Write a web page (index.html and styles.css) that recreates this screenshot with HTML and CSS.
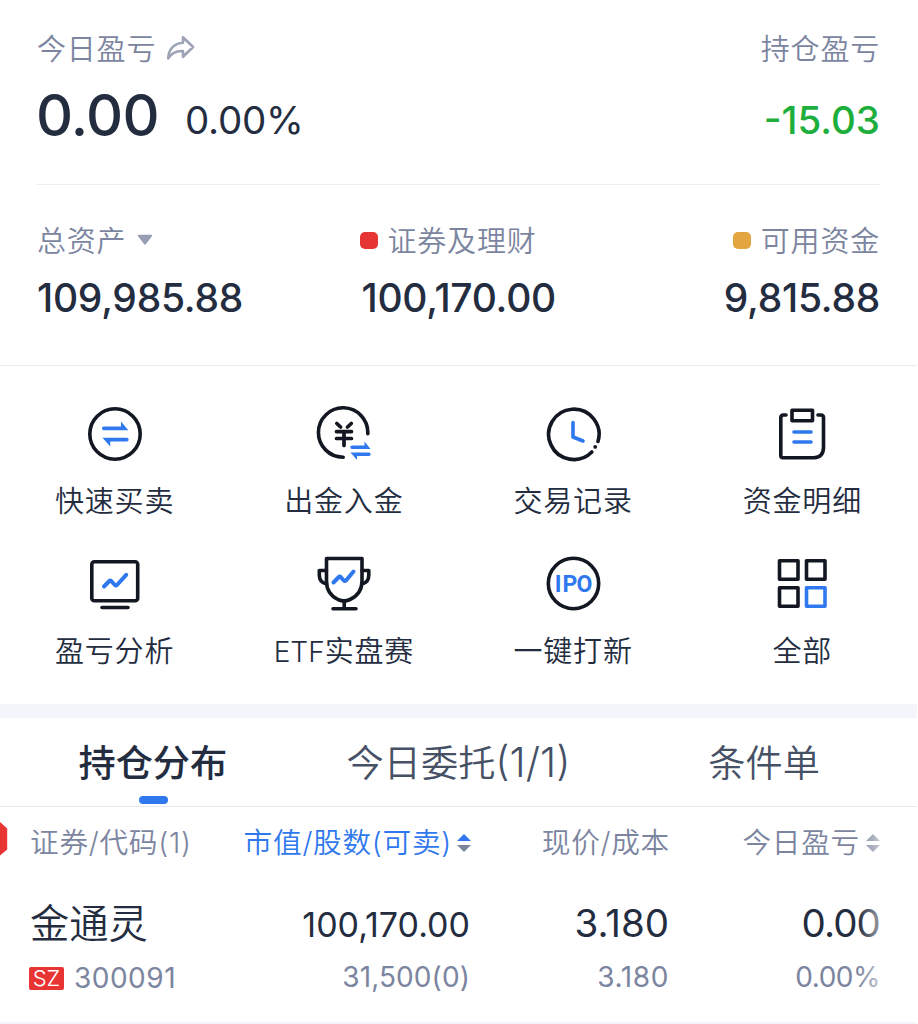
FILE: index.html
```html
<!DOCTYPE html>
<html lang="zh-CN">
<head>
<meta charset="utf-8">
<title>持仓</title>
<link rel="stylesheet" href="styles.css">
</head>
<body>
<main class="page">
  <section class="summary">
    <div class="profit">
      <div class="profit-today">
        <div class="label">今日盈亏
          <svg class="share" width="30" height="26" viewBox="0 0 30 26"><path d="M17 2.200 27.100 12 17 21.800V16C10 15.600 5.600 17.800 2.200 23.400 2.500 14.500 8 8.200 17 7.800Z" fill="none" stroke="#9ea4b8" stroke-width="2.600" stroke-linejoin="round"/></svg>
        </div>
        <div class="figures"><span class="big">0.00</span><span class="pct">0.00%</span></div>
      </div>
      <div class="profit-hold">
        <div class="label">持仓盈亏</div>
        <div class="loss">-15.03</div>
      </div>
    </div>
    <div class="assets">
      <div class="asset">
        <div class="label">总资产<svg class="caret" width="16" height="12" viewBox="0 0 16 12"><path d="M1.500 1.500h13L8 10Z" fill="#979db3" stroke="#979db3" stroke-width="1.500" stroke-linejoin="round"/></svg></div>
        <div class="amount">109,985.88</div>
      </div>
      <div class="asset mid">
        <div class="label"><i class="dot red"></i>证券及理财</div>
        <div class="amount">100,170.00</div>
      </div>
      <div class="asset end">
        <div class="label"><i class="dot gold"></i>可用资金</div>
        <div class="amount">9,815.88</div>
      </div>
    </div>
  </section>

  <nav class="actions">
    <a class="action"><svg class="icon" viewBox="0 0 56 56"><circle cx="28" cy="28" r="25.200"/><g class="blue fill"><path d="M16.800 20.500H34V15.500L41.300 24.200H16.800A1.850 1.850 0 0 1 16.800 20.500Z"/><path d="M39.800 31.700A1.850 1.850 0 0 1 39.800 35.400H23.200V40.500L15.500 31.700Z"/></g></svg><span>快速买卖</span></a>
    <a class="action"><svg class="icon" viewBox="0 0 56 56"><path d="M51.800 27.600A24.700 24.700 0 1 0 27.200 51.200"/><g stroke-width="3.700"><path d="M20.800 17.500 24.600 21M35.300 17.500 31.500 21M20.500 25.600H35.500M20.500 32.500H35.500M28 25.600V39.500"/></g><g class="blue fill"><path d="M36 39.500H48.500V35.500L54.500 42.900H36A1.700 1.700 0 0 1 36 39.500Z"/><path d="M53 46.500A1.700 1.700 0 0 1 53 49.900H41V54L34.500 46.500Z"/></g></svg><span>出金入金</span></a>
    <a class="action shift"><svg class="icon" viewBox="0 0 56 56"><path d="M52 35.500A25.200 25.200 0 1 0 45.800 46"/><circle cx="49.200" cy="40.900" r="1.900" fill="#131722" stroke="none"/><path class="blue" d="M27 16.500V31L37 35"/></svg><span>交易记录</span></a>
    <a class="action shift"><svg class="icon" viewBox="0 0 56 56"><path d="M11 9H8.500Q5.800 9 5.800 11.700V49.500Q5.800 51.800 8 51.800H39Q48.500 51 48.500 41.500V11.700Q48.500 9 45.800 9H43"/><path d="M17 4.300H37.500V14.700H17Z"/><path class="blue" d="M19 26H36M19 36H36"/></svg><span>资金明细</span></a>
    <a class="action"><svg class="icon" viewBox="0 0 56 56"><rect x="4.800" y="5.800" width="45.900" height="39" rx="2.500"/><path d="M15 51.500H41"/><path class="blue wide" d="M17 30.500 22.300 25Q23.200 24 24.200 25L27.800 29Q28.900 30.200 30 29L39.200 18.800"/></svg><span>盈亏分析</span></a>
    <a class="action"><svg class="icon" viewBox="0 0 56 56"><path d="M10.500 2.500H46V25Q46 38 34 43.500Q28 46.200 22 43.500Q10.500 38 10.500 25Z"/><path d="M10.500 14.500H3.300V19Q3.300 26.500 10.500 28M46 14.500H52.800V19Q52.800 26.500 46 28M28.200 45V52M17 52.700H40"/><path class="blue wide" d="M17.500 26.500 22.800 21Q23.700 20 24.700 21L27.800 24.500Q28.900 25.700 30 24.500L37.500 15.500"/></svg><span><em>ETF</em>实盘赛</span></a>
    <a class="action shift"><svg class="icon" viewBox="0 0 56 56"><circle cx="27.500" cy="27.500" r="25.200"/><text class="ipo" y="35.600" x="8.700 16.500 30.600">IPO</text></svg><span>一键打新</span></a>
    <a class="action shift"><svg class="icon" viewBox="0 0 56 56"><path d="M4.500 4.700H23V23.200H4.500ZM31.500 4.700H50V23.200H31.500ZM4.500 31.700H23V50.200H4.500Z"/><path class="blue" d="M31.500 31.700H50V50.200H31.500Z"/></svg><span>全部</span></a>
  </nav>

  <section class="holdings">
    <div class="tabs">
      <div class="tab active">持仓分布</div>
      <div class="tab">今日委托<span class="count">(1/1)</span></div>
      <div class="tab">条件单</div>
    </div>
    <div class="thead">
      <div class="c1">证券/代码(1)</div>
      <div class="c2">市值/股数(可卖)<svg class="sort" width="14" height="20" viewBox="0 0 14 20"><path d="M0 8 7 1 14 8Z" fill="#2f78ee"/><path d="M0 12 7 19 14 12Z" fill="#7e869d"/></svg></div>
      <div class="c3">现价/成本</div>
      <div class="c4">今日盈亏<svg class="sort" width="14" height="20" viewBox="0 0 14 20"><path d="M0 8 7 1 14 8ZM0 12 7 19 14 12Z" fill="#7e869d"/></svg></div>
      <svg class="marker" width="8" height="36" viewBox="0 0 8 36"><path d="M0 1 7.200 7.500V28.500L0 34.500Z" fill="#e93434"/></svg>
    </div>
    <div class="row">
      <div class="c1"><div class="name">金通灵</div><div class="code"><b class="tag">SZ</b><span>300091</span></div></div>
      <div class="c2"><div class="value small">100,170.00</div><div class="sub">31,500(0)</div></div>
      <div class="c3"><div class="value">3.180</div><div class="sub wider">3.180</div></div>
      <div class="c4"><div class="value tight">0.00</div><div class="sub tight">0.00%</div></div>
    </div>
    <div class="fade"></div>
  </section>
</main>
</body>
</html>
```
FILE: styles.css
```css
* { box-sizing: border-box; }
body {
  margin: 0;
  background: #fff;
  color: #242d3f;
  font-family: Inter, "Noto Sans CJK SC", sans-serif;
}
.page { width: 917px; height: 1024px; overflow: hidden; }

.summary { height: 366px; padding: 27px 37px 0; border-bottom: 1px solid #ececf0; }
.label {
  display: flex;
  align-items: center;
  height: 40px;
  color: #7c859f;
  font-size: 29px;
  font-weight: 350;
  letter-spacing: 0.8px;
  white-space: nowrap;
}
.profit { display: flex; justify-content: space-between; height: 158px; border-bottom: 1px solid #ececf4; }
.share { margin: 2px 0 0 10px; }
.figures { display: flex; padding-top: 2px; line-height: 92px; }
.big { margin-left: -1px; font-size: 57.500px; font-weight: 500; letter-spacing: -0.700px; }
.pct { margin: 5px 0 0 26px; font-size: 38.500px; font-weight: 400; letter-spacing: -0.200px; }
.profit-hold { display: flex; flex-direction: column; align-items: flex-end; }
.loss { margin-top: 7px; line-height: 92px; font-size: 38.500px; font-weight: 500; color: #1eae3c; }

.assets { display: flex; justify-content: space-between; padding-top: 34px; }
.asset { display: flex; flex-direction: column; width: 240px; }
.mid { width: 200px; padding-left: 3px; }
.end { align-items: flex-end; }
.caret { margin: 2px 0 0 11px; }
.dot { width: 18px; height: 17px; margin: 2px 10px 0 0; border-radius: 5px; }
.mid .label { margin-left: -2px; }
.red { background: #e53535; }
.gold { background: #e3a53f; }
.amount { padding-top: 2px; line-height: 74px; font-size: 39px; font-weight: 500; letter-spacing: -0.250px; }

.actions { display: grid; grid-template-columns: repeat(4, 1fr); grid-auto-rows: 150px; height: 338px; padding-top: 40px; }
.action { display: flex; flex-direction: column; align-items: center; font-size: 29px; font-weight: 350; letter-spacing: 0.8px; line-height: 40px; }
.action span { margin-top: 20px; }
.action em { font-style: normal; font-size: 28px; letter-spacing: 0; }
.icon { width: 56px; height: 56px; fill: none; stroke: #131722; stroke-width: 3.600; stroke-linecap: round; stroke-linejoin: round; }
.shift .icon { margin-left: 1px; }
.blue { stroke: #2f78ee; }
.wide { stroke-width: 4; }
.fill { fill: #2f78ee; stroke: none; }
.ipo { fill: #2f78ee; stroke: none; font: 700 23px Roboto, sans-serif; letter-spacing: 0; }

.holdings { position: relative; border-top: 14px solid #f4f5fa; }
.tabs { display: grid; grid-template-columns: repeat(3, 1fr); height: 89px; border-bottom: 1px solid #e8eaf1; }
.tab { position: relative; height: 88px; text-align: center; line-height: 92px; color: #465166; font-size: 37.200px; font-weight: 350; }
.count { font-size: 41px; line-height: 1; }
.active { color: #242d3f; font-weight: 500; }
.active::after { content: ""; position: absolute; left: 50%; bottom: 2px; width: 29px; height: 8px; margin-left: -14px; border-radius: 4px; background: #2f78ee; }
.thead, .row { position: relative; display: grid; grid-template-columns: 180px 260px 199px 211px; padding-left: 30px; }
.thead { height: 70px; line-height: 71px; color: #7c859f; font-size: 28.700px; font-weight: 350; letter-spacing: 0.7px; white-space: nowrap; }
.thead .c2 { color: #2f78ee; }
.thead .c3 { margin-right: -1px; }
.c2, .c3, .c4 { text-align: right; }
.thead .c2, .thead .c4 { display: flex; align-items: center; justify-content: flex-end; }
.sort { margin-left: 6px; }
.thead .c2 .sort { margin: 0 -1px 0 5px; }
.marker { position: absolute; left: 0; top: 14px; }
.row { height: 147px; border-bottom: 2px solid #f4f5fa; }
.name { height: 92px; line-height: 94px; font-size: 39.300px; font-weight: 350; }
.code { display: flex; align-items: center; height: 18px; color: #7c859f; font-size: 28px; letter-spacing: 0.500px; }
.tag { display: flex; align-items: center; justify-content: center; width: 35px; height: 23px; margin: 0 10px 0 -1px; border-radius: 2px; background: #e93434; color: #fff; font-size: 22px; font-weight: 300; letter-spacing: 0; }
.value { height: 92px; line-height: 92px; font-size: 38.500px; }
.small { font-size: 34px; padding-top: 2px; }
.sub { height: 16px; line-height: 16px; color: #7c859f; font-size: 28px; letter-spacing: 0.100px; }
.wider { letter-spacing: 0.600px; }
.tight { letter-spacing: -0.900px; }
.sub.tight { letter-spacing: -0.500px; }
.fade { position: absolute; right: 0; top: 90px; width: 59px; height: 213px; background: linear-gradient(to right, rgba(255,255,255,0), #fff 70%); }
```
